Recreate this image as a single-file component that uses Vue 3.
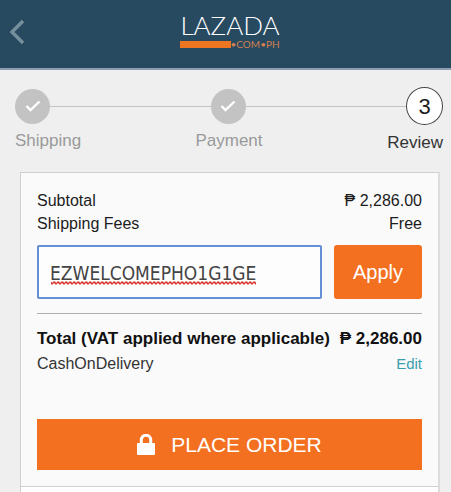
<script setup>
import { ref } from 'vue'

const voucher = ref('EZWELCOMEPHO1G1GE')
const amounts = [
  { label: 'Subtotal', value: '₱ 2,286.00' },
  { label: 'Shipping Fees', value: 'Free' },
]
</script>

<template>
  <div class="page">
    <header class="topbar">
      <a class="back" href="#" aria-label="Back">
        <svg width="16" height="26" viewBox="0 0 16 26">
          <path d="M14 2 L3 13 L14 24" fill="none" stroke="#76909b" stroke-width="3.4" />
        </svg>
      </a>
      <div class="logo">
        <span class="logo-name">LAZADA</span>
        <span class="logo-sub"><span class="logo-bar"></span>•COM•PH</span>
      </div>
    </header>

    <nav class="steps" aria-label="Checkout steps">
      <div class="track">
        <span class="dot">
          <svg width="16" height="12" viewBox="0 0 16 12"><path d="M1.5 6 L5.5 10 L14.5 1.5" fill="none" stroke="#fff" stroke-width="2.4" /></svg>
        </span>
        <span class="line"></span>
        <span class="dot">
          <svg width="16" height="12" viewBox="0 0 16 12"><path d="M1.5 6 L5.5 10 L14.5 1.5" fill="none" stroke="#fff" stroke-width="2.4" /></svg>
        </span>
        <span class="line"></span>
        <span class="dot current">3</span>
      </div>
      <div class="labels">
        <span>Shipping</span>
        <span>Payment</span>
        <span class="active">Review</span>
      </div>
    </nav>

    <main class="card">
      <section class="summary">
        <div v-for="row in amounts" :key="row.label" class="row">
          <span>{{ row.label }}</span>
          <span>{{ row.value }}</span>
        </div>
        <form class="voucher" @submit.prevent>
          <input v-model="voucher" class="code" type="text" aria-label="Voucher code" spellcheck="false" />
          <span class="misspelt" aria-hidden="true">
            <svg width="205" height="4">
              <defs>
                <pattern id="wave" width="4" height="4" patternUnits="userSpaceOnUse">
                  <path d="M-1 0 L1 3 L3 1 L5 3" fill="none" stroke="#d8302a" stroke-width="1.3" />
                </pattern>
              </defs>
              <rect width="205" height="4" fill="url(#wave)" />
            </svg>
          </span>
          <button class="apply" type="submit">Apply</button>
        </form>
        <div class="row total">
          <span>Total (VAT applied where applicable)</span>
          <span>₱ 2,286.00</span>
        </div>
        <div class="row method">
          <span>CashOnDelivery</span>
          <a href="#" class="edit">Edit</a>
        </div>
        <button class="order" type="button">
          <svg width="18" height="22" viewBox="0 0 18 22">
            <path d="M4.3 10 V6 a4.7 4.7 0 0 1 9.4 0 V10" fill="none" stroke="#fff" stroke-width="3" />
            <rect x="0" y="9" width="18" height="12" rx="1" fill="#fff" />
          </svg>
          PLACE ORDER
        </button>
      </section>
      <section class="next"></section>
    </main>
  </div>
</template>

<style>
body {
  margin: 0;
  background: #efefef;
}
</style>

<style scoped>
* {
  box-sizing: border-box;
}
.page {
  display: flex;
  flex-direction: column;
  min-height: 100vh;
  font: 16px/23px "Liberation Sans", Arial, sans-serif;
  color: #1c1c1c;
  background: #efefef;
}
.topbar {
  display: grid;
  grid-template-columns: 1fr auto 1fr;
  align-items: center;
  height: 70px;
  padding: 0 0 8px 9px;
  background: #284a61;
  border-bottom: 2px solid #8e9bb0;
}
.back {
  display: flex;
  padding-top: 4px;
}
.logo {
  display: flex;
  flex-direction: column;
  font-family: Lato, sans-serif;
}
.logo-name {
  font-size: 26px;
  font-weight: 300;
  line-height: 28px;
  color: #fff;
}
.logo-sub {
  display: flex;
  align-items: center;
  font-size: 10px;
  line-height: 10px;
  color: #d08050;
}
.logo-bar {
  flex: 1;
  height: 7px;
  background: #ee7623;
}
.steps {
  padding: 17px 8px 0 15px;
}
.track {
  display: flex;
  align-items: center;
}
.line {
  flex: 1;
  height: 1px;
  background: #c4c4c4;
}
.dot {
  display: flex;
  align-items: center;
  justify-content: center;
  width: 35px;
  height: 35px;
  border-radius: 50%;
  background: #c3c3c3;
}
.current {
  width: 37px;
  height: 38px;
  border: 1px solid #444;
  background: #fff;
  font-size: 22px;
}
.labels {
  display: grid;
  grid-template-columns: 1fr 1fr 1fr;
  margin-top: 4px;
  font-size: 17px;
  color: #9a9a9a;
  text-align: center;
}
.labels span:first-child {
  text-align: left;
}
.labels .active {
  padding-top: 2px;
  text-align: right;
  color: #333;
}
.card {
  display: flex;
  flex: 1;
  flex-direction: column;
  margin: 18px 11px 0 20px;
  border: 1px solid #cfcfcf;
  border-right: 2px solid #dcdcdc;
  border-bottom: 0;
  background: #fff;
}
.summary {
  padding: 16px;
  background: #fafafa;
  border-bottom: 1px solid #cfcfcf;
}
.row {
  display: flex;
  justify-content: space-between;
}
.voucher {
  position: relative;
  display: flex;
  gap: 12px;
  margin-top: 10px;
  padding-bottom: 14px;
  border-bottom: 1px solid #b0b0b0;
}
.code {
  flex: 1;
  min-width: 0;
  height: 54px;
  padding: 2px 11px 0;
  border: 2px solid #6590d5;
  border-radius: 2px;
  outline: none;
  background: #fdfdfd;
  font: 19px "DejaVu Sans Condensed", "DejaVu Sans", sans-serif;
  color: #444;
}
.misspelt {
  position: absolute;
  top: 36px;
  left: 14px;
  display: flex;
  pointer-events: none;
}
.apply {
  width: 88px;
  height: 54px;
  border: 0;
  border-radius: 3px;
  background: #f37021;
  color: #fff;
  font: 20px "Liberation Sans", Arial, sans-serif;
}
.total {
  margin-top: 13px;
  font-size: 17px;
  font-weight: bold;
  color: #111;
}
.method {
  margin-top: 2px;
  color: #333;
}
.edit {
  font-size: 15px;
  color: #3a9fac;
  text-decoration: none;
}
.order {
  display: flex;
  align-items: center;
  justify-content: center;
  gap: 16px;
  width: 100%;
  height: 51px;
  margin-top: 44px;
  border: 0;
  background: #f37021;
  color: #fff;
  font: 21px "Liberation Sans", Arial, sans-serif;
}
.next {
  flex: 1;
  background: #fff;
}
</style>
